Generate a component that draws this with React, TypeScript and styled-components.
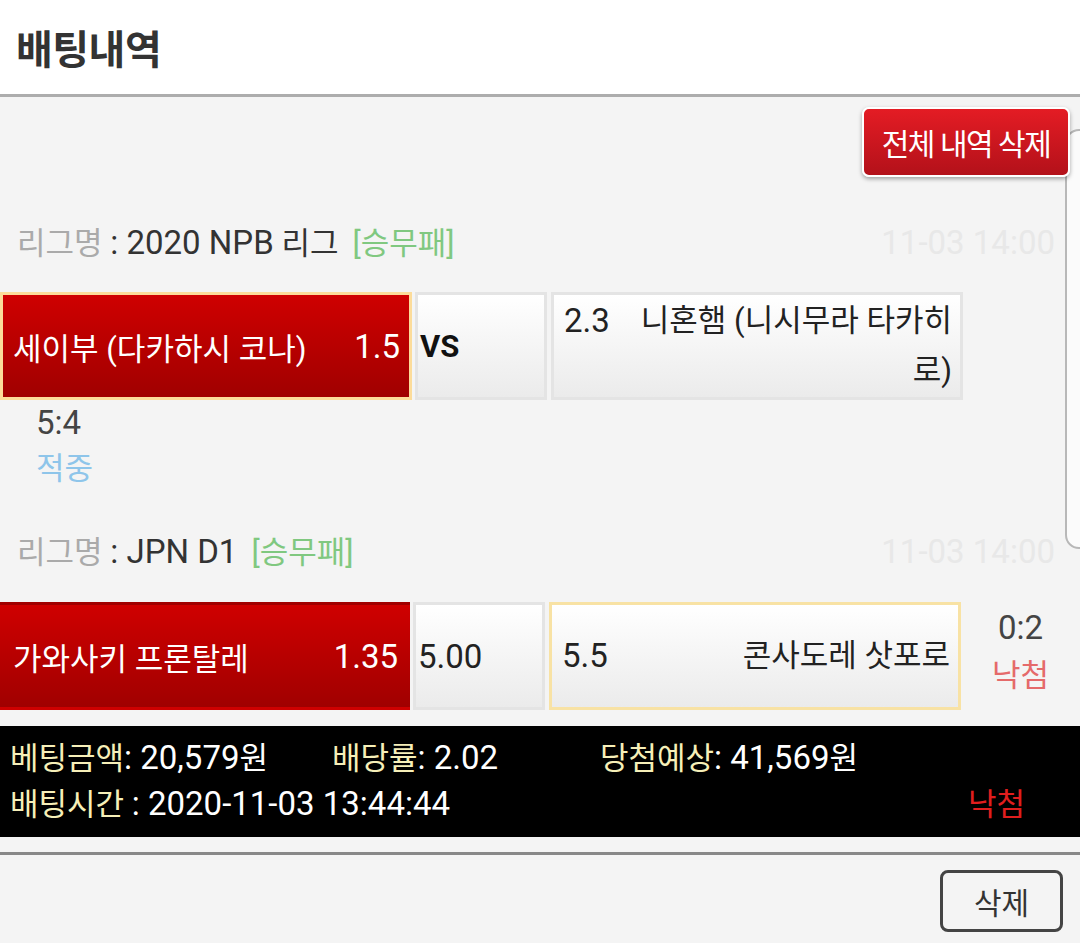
import React from "react";
import styled, { createGlobalStyle } from "styled-components";

const GlobalStyle = createGlobalStyle`
  html, body { margin: 0; padding: 0; }
  body {
    background: #f4f4f4;
    font-family: Roboto, "Noto Sans CJK KR", "Noto Sans", sans-serif;
    font-size: 31px;
    color: #333;
  }
  * { box-sizing: border-box; }
`;

const Page = styled.div`
  position: relative;
  width: 1080px;
  height: 943px;
  overflow: hidden;
  background: #f4f4f4;
`;

const Header = styled.header`
  height: 97px;
  background: #fff;
  border-bottom: 3px solid #adadad;
  display: flex;
  align-items: center;
  padding-left: 16px;
`;

const Title = styled.h1`
  margin: 0;
  font-size: 40px;
  font-weight: 700;
  color: #333;
  letter-spacing: -0.5px;
`;

const SidePanel = styled.div`
  position: absolute;
  left: 1065px;
  top: 129px;
  width: 40px;
  height: 420px;
  background: #fbfbfb;
  border: 2px solid #b8b8b8;
  border-radius: 14px 0 0 14px;
`;

const TopBar = styled.div`
  display: flex;
  justify-content: flex-end;
  padding: 10px 10px 0 0;
  position: relative;
  z-index: 2;
`;

const DeleteAllButton = styled.button`
  width: 208px;
  height: 70px;
  border: 2px solid #fff;
  border-radius: 7px;
  background: linear-gradient(#e41c24, #b3111a);
  box-shadow: 0 2px 4px rgba(0, 0, 0, 0.35);
  color: #fff;
  font-family: inherit;
  font-size: 30px;
  letter-spacing: -1.5px;
  padding: 0;
`;

/* Latin / numeric runs render a little larger than the Hangul, as on the device */
const Num = styled.span`
  font-size: 33px;
`;

const Bet = styled.section`
  display: flex;
  flex-direction: column;
`;

const LeagueRow = styled.div<{ $top: number }>`
  height: 50px;
  line-height: 50px;
  margin-top: ${(p) => p.$top}px;
  padding: 0 25px 0 17px;
  display: flex;
  justify-content: space-between;
  align-items: baseline;
  white-space: nowrap;
`;

const LeagueText = styled.div`
  color: #333;
`;

const LeagueLabel = styled.span`
  color: #aaa;
`;

const GameType = styled.span`
  color: #80c880;
  margin-left: 14px;
`;

const Time = styled(Num)`
  color: #e8e8e8;
`;

const MatchRow = styled.div<{ $top: number }>`
  display: flex;
  align-items: stretch;
  margin-top: ${(p) => p.$top}px;
  height: 108px;
`;

const HomeBox = styled.div<{ $selected?: boolean; $width: number }>`
  width: ${(p) => p.$width}px;
  display: flex;
  align-items: center;
  justify-content: space-between;
  padding: 0 9px 0 10px;
  background: linear-gradient(#cf0000, #a00000);
  border: 3px solid ${(p) => (p.$selected ? "#fcdc9a" : "transparent")};
  color: #fff;
  white-space: nowrap;
`;

const PlainBox = styled.div<{ $selected?: boolean; $width: number; $ml: number }>`
  width: ${(p) => p.$width}px;
  margin-left: ${(p) => p.$ml}px;
  display: flex;
  align-items: center;
  background: linear-gradient(#ffffff, #ebebeb);
  border: 3px solid ${(p) => (p.$selected ? "#f8e2a4" : "#e4e4e4")};
  color: #222;
`;

const DrawBox = styled(PlainBox)`
  padding-left: 2px;
`;

const VsText = styled.span`
  font-weight: 700;
  color: #111;
`;

const AwayBox = styled(PlainBox)`
  padding: 0 8px 0 10px;
  line-height: 50px;
`;

const AwayOdds = styled(Num)`
  flex: 0 0 68px;
  align-self: flex-start;
`;

const AwayName = styled.span`
  flex: 1;
  text-align: right;
`;

const AwayInner = styled.div`
  display: flex;
  width: 100%;
  align-items: flex-start;
`;

const ResultColumn = styled.div<{ $inline?: boolean }>`
  display: flex;
  flex-direction: column;
  align-items: ${(p) => (p.$inline ? "center" : "flex-start")};
  line-height: 46px;
  ${(p) => (p.$inline ? "flex: 1; padding-top: 2px; line-height: 48px;" : "padding-left: 36px;")}
`;

const Score = styled(Num)`
  color: #444;
`;

const Outcome = styled.span<{ $win: boolean }>`
  color: ${(p) => (p.$win ? "#8ec5ea" : "#e56a6a")};
`;

const Summary = styled.div`
  margin-top: 16px;
  height: 111px;
  background: #000;
  color: #fff;
  padding: 9px 10px 0 10px;
  line-height: 45px;
`;

const SummaryLine = styled.div`
  display: flex;
  align-items: baseline;
`;

const SummaryItem = styled.span<{ $width?: number }>`
  ${(p) => (p.$width ? `width: ${p.$width}px;` : "")}
  white-space: nowrap;
`;

const SumLabel = styled.span`
  color: #f6efb8;
`;

const LoseMark = styled.span`
  margin-left: auto;
  margin-right: 45px;
  color: #e01e1e;
`;

const Divider = styled.hr`
  margin: 15px 0 0 0;
  border: 0;
  border-top: 3px solid #888;
`;

const Footer = styled.div`
  display: flex;
  justify-content: flex-end;
  padding: 15px 17px 0 0;
`;

const DeleteButton = styled.button`
  width: 123px;
  height: 62px;
  border: 3px solid #444;
  border-radius: 8px;
  background: #f4f4f4;
  color: #333;
  font-family: inherit;
  font-size: 30px;
  padding: 0;
`;

export default function App() {
  return (
    <Page>
      <GlobalStyle />
      <Header>
        <Title>배팅내역</Title>
      </Header>
      <SidePanel />
      <TopBar>
        <DeleteAllButton>전체 내역 삭제</DeleteAllButton>
      </TopBar>

      <Bet>
        <LeagueRow $top={41}>
          <LeagueText>
            <LeagueLabel>리그명</LeagueLabel> <Num>: 2020 NPB</Num> 리그
            <GameType>[승무패]</GameType>
          </LeagueText>
          <Time>11-03 14:00</Time>
        </LeagueRow>
        <MatchRow $top={24}>
          <HomeBox $selected $width={412}>
            <span>세이부 (다카하시 코나)</span>
            <Num>1.5</Num>
          </HomeBox>
          <DrawBox $width={132} $ml={3}>
            <VsText>VS</VsText>
          </DrawBox>
          <AwayBox $width={412} $ml={4}>
            <AwayInner>
              <AwayOdds>2.3</AwayOdds>
              <AwayName>니혼햄 (니시무라 타카히로)</AwayName>
            </AwayInner>
          </AwayBox>
        </MatchRow>
        <ResultColumn>
          <Score>5:4</Score>
          <Outcome $win>적중</Outcome>
        </ResultColumn>

        <LeagueRow $top={35}>
          <LeagueText>
            <LeagueLabel>리그명</LeagueLabel> <Num>: JPN D1</Num>
            <GameType>[승무패]</GameType>
          </LeagueText>
          <Time>11-03 14:00</Time>
        </LeagueRow>
        <MatchRow $top={25}>
          <HomeBox $width={410}>
            <span>가와사키 프론탈레</span>
            <Num>1.35</Num>
          </HomeBox>
          <DrawBox $width={132} $ml={3}>
            <Num>5.00</Num>
          </DrawBox>
          <AwayBox $selected $width={412} $ml={4}>
            <AwayInner>
              <AwayOdds>5.5</AwayOdds>
              <AwayName>콘사도레 삿포로</AwayName>
            </AwayInner>
          </AwayBox>
          <ResultColumn $inline>
            <Score>0:2</Score>
            <Outcome $win={false}>낙첨</Outcome>
          </ResultColumn>
        </MatchRow>
      </Bet>

      <Summary>
        <SummaryLine>
          <SummaryItem $width={322}>
            <SumLabel>베팅금액</SumLabel>
            <Num>: 20,579</Num>원
          </SummaryItem>
          <SummaryItem $width={268}>
            <SumLabel>배당률</SumLabel>
            <Num>: 2.02</Num>
          </SummaryItem>
          <SummaryItem>
            <SumLabel>당첨예상</SumLabel>
            <Num>: 41,569</Num>원
          </SummaryItem>
        </SummaryLine>
        <SummaryLine>
          <SummaryItem>
            <SumLabel>배팅시간</SumLabel> <Num>: 2020-11-03 13:44:44</Num>
          </SummaryItem>
          <LoseMark>낙첨</LoseMark>
        </SummaryLine>
      </Summary>

      <Divider />
      <Footer>
        <DeleteButton>삭제</DeleteButton>
      </Footer>
    </Page>
  );
}
